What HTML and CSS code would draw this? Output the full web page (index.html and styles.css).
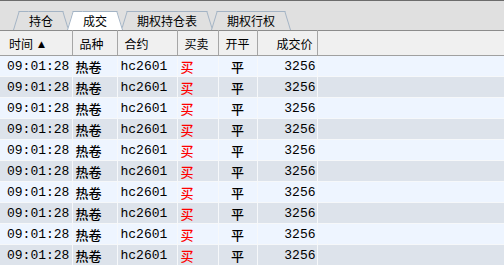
FILE: index.html
```html
<!DOCTYPE html>
<html lang="zh-CN">
<head>
    <meta charset="UTF-8">
    <title>成交</title>
    <link rel="stylesheet" href="styles.css">
</head>
<body>

    <div class="tabbar">
        <div class="tab">持仓</div>
        <div class="tab active">成交</div>
        <div class="tab">期权持仓表</div>
        <div class="tab">期权行权</div>
    </div>

    <table class="grid">
        <colgroup>
            <col class="col-time">
            <col class="col-name">
            <col class="col-code">
            <col class="col-side">
            <col class="col-open">
            <col class="col-price">
            <col>
        </colgroup>
        <thead>
            <tr>
                <th>时间<span class="sort">▲</span></th>
                <th>品种</th>
                <th>合约</th>
                <th>买卖</th>
                <th>开平</th>
                <th class="num">成交价</th>
                <th class="filler"></th>
            </tr>
        </thead>
        <tbody id="rows"></tbody>
    </table>

    <script>
        // 10 identical fills, same as the terminal shows
        var body = document.getElementById('rows');
        for (var i = 0; i < 10; i++) {
            var tr = document.createElement('tr');
            tr.innerHTML = `
                <td class="time">09:01:28</td>
                <td class="cjk">热卷</td>
                <td>hc2601</td>
                <td class="buy cjk">买</td>
                <td class="center cjk">平</td>
                <td class="num">3256</td>
                <td></td>
            `;
            body.appendChild(tr);
        }
    </script>

</body>
</html>
```

FILE: styles.css
```css
body {
    margin: 0;
    background: #eef5ff;
    font-family: "Noto Sans CJK SC", sans-serif;
    overflow: hidden;
}

/* tab strip */
.tabbar {
    display: flex;
    height: 19px;
    padding: 10px 0 0 13px;
    background: #e0e0e0;
    border-top: 1px solid #6c6c6c;
}

.tab {
    position: relative;
    padding: 0 16px;
    margin-right: -2px;
    font-size: 12px;
    line-height: 19px;
    color: #000;
    z-index: 1;
}

/* two skewed halves make the trapezoid */
.tab::before,
.tab::after {
    content: "";
    position: absolute;
    top: 0;
    bottom: 0;
    width: 60%;
    background: #e0e0e0;
    border-top: 1px solid #a3b3c4;
    z-index: -1;
}

.tab::before {
    left: 0;
    border-left: 1px solid #a3b3c4;
    transform: skewX(-17deg);
    transform-origin: bottom left;
}

.tab::after {
    right: 0;
    border-right: 1px solid #a3b3c4;
    transform: skewX(17deg);
    transform-origin: bottom right;
}

.tab.active {
    z-index: 2;
}

.tab.active::before,
.tab.active::after {
    background: #fff;
}

/* grid */
.grid {
    width: 100%;
    table-layout: fixed;
    border-collapse: collapse;
}

.col-time { width: 72px; }
.col-name { width: 45px; }
.col-code { width: 60px; }
.col-side { width: 41px; }
.col-open { width: 39px; }
.col-price { width: 60px; }

.grid th {
    height: 24px;
    padding: 0 0 0 7px;
    background: #f0f0f0;
    border-top: 1px solid #8c8c8c;
    border-bottom: 1px solid #a0a0a0;
    border-right: 1px solid #a6a6a6;
    font-weight: normal;
    font-size: 12px;
    text-align: left;
    white-space: nowrap;
    color: #000;
}

.grid th:first-child {
    padding-left: 9px;
}

.grid th.num {
    text-align: right;
    padding-right: 4px;
}

.grid th.filler {
    border-right: none;
}

.sort {
    margin-left: 5px;
    font-family: "DejaVu Sans", sans-serif;
    font-size: 9px;
    vertical-align: 2px;
}

.grid td {
    height: 20px;
    padding: 0 0 0 3px;
    border-right: 1px solid #f6f8fa;
    border-bottom: 1px solid #f6f8fa;
    font-family: "Liberation Mono", "Noto Sans CJK SC", monospace;
    font-size: 13px;
    white-space: nowrap;
    color: #000;
}

.grid td.cjk {
    font-family: "Noto Sans CJK SC", sans-serif;
    font-weight: 500;
}

.grid tbody tr:nth-child(even) td {
    background: #dde3eb;
}

.grid td.time {
    padding-left: 7px;
    overflow: visible;
}

.grid td.buy {
    color: #ff0000;
}

.grid td.center {
    text-align: center;
    padding: 0;
}

.grid td.num {
    text-align: right;
    padding-right: 1px;
}

.grid td:last-child {
    border-right: none;
}
```
